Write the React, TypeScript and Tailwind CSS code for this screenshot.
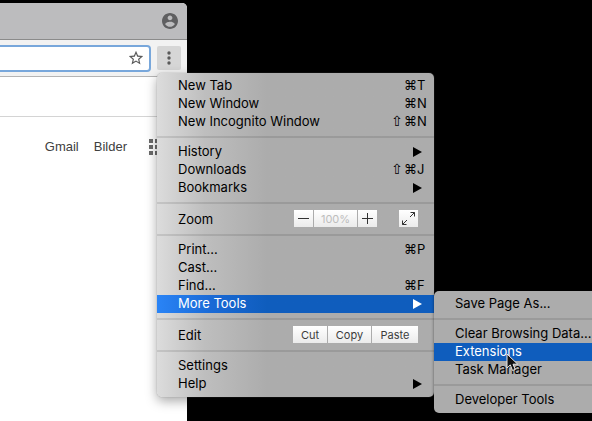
import type { ReactNode } from "react";

function Separator() {
  return <hr className="my-[5px] h-[2px] border-0 bg-black/10" />;
}

function Arrow() {
  return (
    <svg viewBox="0 0 9 10" className="mt-0.5 mr-3 h-[10px] w-[9px] fill-current" aria-hidden="true">
      <path d="M0 0 9 5 0 10Z" />
    </svg>
  );
}

function Shortcut({ letter, shift = false }: { letter: string; shift?: boolean }) {
  return (
    <span className="flex text-left">
      {shift && <span className="w-[13px] font-['DejaVu_Sans',sans-serif] text-[14px]">⇧</span>}
      <span className="w-[13px]">⌘</span>
      <span className="w-[17px]">{letter}</span>
    </span>
  );
}

function Item({ label, active = false, children }: { label: string; active?: boolean; children?: ReactNode }) {
  return (
    <button
      type="button"
      role="menuitem"
      className={
        active
          ? "flex h-[18px] w-full items-center justify-between bg-linear-to-r from-[#2a84f6] via-[#1a6ad6] via-[54px] to-[#0f5dbd] to-[110px] pb-0.5 pl-[21px] text-white"
          : "flex h-[18px] w-full items-center justify-between pb-0.5 pl-[21px]"
      }
    >
      <span className="whitespace-nowrap">{label}</span>
      {children}
    </button>
  );
}

const control =
  "flex h-[17px] items-center justify-center bg-linear-to-b from-white to-[#ebebeb] text-[11px] text-[#3c3c3c]";

function MainMenu() {
  return (
    <div
      role="menu"
      aria-label="Browser menu"
      className="absolute top-[73px] left-[157px] w-[277px] rounded-[5px] bg-linear-to-r from-[#dcdcdc] via-[#bebebe] via-[48px] to-[#acacac] to-[110px] py-1 shadow-[0_0_1px_#777,0_4px_12px_rgba(0,0,0,0.35)]"
    >
      <Item label="New Tab"><Shortcut letter="T" /></Item>
      <Item label="New Window"><Shortcut letter="N" /></Item>
      <Item label="New Incognito Window"><Shortcut shift letter="N" /></Item>
      <Separator />
      <Item label="History"><Arrow /></Item>
      <Item label="Downloads"><Shortcut shift letter="J" /></Item>
      <Item label="Bookmarks"><Arrow /></Item>
      <Separator />
      <div className="flex h-5 items-center pr-4 pb-px pl-[21px]">
        <span>Zoom</span>
        <div className="ml-auto flex gap-px">
          <button type="button" aria-label="Zoom out" className={`${control} w-[19px]`}>
            <svg viewBox="0 0 11 11" className="size-[11px]"><path d="M0 5.5h11" stroke="#333" /></svg>
          </button>
          <output className="flex h-[17px] w-[43px] items-center justify-center bg-linear-to-b from-white to-[#ebebeb] text-[11px] text-[#bdbdbd]">100%</output>
          <button type="button" aria-label="Zoom in" className={`${control} w-[19px]`}>
            <svg viewBox="0 0 11 11" className="size-[11px]"><path d="M0 5.5h11M5.5 0v11" stroke="#333" /></svg>
          </button>
        </div>
        <button type="button" aria-label="Full screen" className={`${control} ml-[22px] w-[19px]`}>
          <svg viewBox="0 0 13 13" className="size-[13px]" fill="none" stroke="#333">
            <path d="M8.5.5h4v4M12.5.5 8 5M4.500 12.500h-4v-4M.5 12.500 5 8" />
          </svg>
        </button>
      </div>
      <Separator />
      <Item label="Print..."><Shortcut letter="P" /></Item>
      <Item label="Cast..." />
      <Item label="Find..."><Shortcut letter="F" /></Item>
      <Item label="More Tools" active><Arrow /></Item>
      <Separator />
      <div className="flex h-5 items-center justify-between pr-4 pb-px pl-[21px]">
        <span>Edit</span>
        <div className="flex gap-px">
          <button type="button" className={`${control} w-[34px]`}>Cut</button>
          <button type="button" className={`${control} w-[43px]`}>Copy</button>
          <button type="button" className={`${control} w-[46px]`}>Paste</button>
        </div>
      </div>
      <Separator />
      <Item label="Settings" />
      <Item label="Help"><Arrow /></Item>
    </div>
  );
}

function ToolsMenu() {
  return (
    <div
      role="menu"
      aria-label="More Tools"
      className="absolute top-[291px] left-[434px] w-[176px] rounded-[5px] bg-[#acacac] py-1 shadow-[0_0_3px_rgba(0,0,0,0.5)]"
    >
      <Item label="Save Page As..." />
      <Separator />
      <Item label="Clear Browsing Data..." />
      <button type="button" role="menuitem" className="flex h-[18px] w-full items-center bg-[#0f5dbd] pb-0.5 pl-[21px] text-white">
        Extensions
      </button>
      <Item label="Task Manager" />
      <Separator />
      <Item label="Developer Tools" />
    </div>
  );
}

function BrowserWindow() {
  return (
    <div className="flex w-[187px] grow flex-col overflow-hidden rounded-tr-[5px] bg-white">
      <div className="flex h-[37px] items-center justify-end border-b border-[#8b8b8b] bg-[#bcbcbe] pr-[9px]">
        <button type="button" aria-label="Profile">
          <svg viewBox="2 2 20 20" className="size-4 fill-[#5f5f61]">
            <path d="M12 2C6.480 2 2 6.480 2 12s4.480 10 10 10 10-4.480 10-10S17.520 2 12 2zm0 3c1.660 0 3 1.340 3 3s-1.340 3-3 3-3-1.340-3-3 1.340-3 3-3zm0 14.200c-2.500 0-4.710-1.280-6-3.220.03-1.990 4-3.080 6-3.080 1.990 0 5.970 1.090 6 3.080-1.290 1.940-3.500 3.220-6 3.220z" />
          </svg>
        </button>
      </div>
      <div className="flex h-[37px] items-center gap-1.5 border-b border-[#b4b4b4] bg-[#f2f2f2] pr-1.5">
        <div className="flex h-[27px] grow items-center rounded-r-[4px] border-2 border-l-0 border-[#78a7db] bg-white pr-[5px]">
          <input type="text" aria-label="Address" className="h-5 w-0 grow outline-none" />
          <button type="button" aria-label="Bookmark this page">
            <svg viewBox="1 1 22 22" className="size-4 fill-[#5a5a5a]">
              <path d="M22 9.240l-7.190-.62L12 2 9.190 8.630 2 9.240l5.460 4.730L5.820 21 12 17.270 18.180 21l-1.630-7.030L22 9.240zM12 15.400l-3.760 2.270 1-4.280-3.320-2.880 4.380-.38L12 6.100l1.710 4.040 4.380.38-3.320 2.880 1 4.280L12 15.400z" />
            </svg>
          </button>
        </div>
        <button type="button" aria-label="Menu" className="flex size-6 items-center justify-center rounded-[2px] bg-[#d6d6d6]">
          <svg viewBox="0 0 4 14" className="h-[14px] w-1 fill-[#5a5a5a]">
            <circle cx="2" cy="2" r="1.700" /><circle cx="2" cy="7" r="1.700" /><circle cx="2" cy="12" r="1.700" />
          </svg>
        </button>
      </div>
      <div className="h-10 border-b border-[#d4d4d4]" />
      <nav className="flex items-center justify-end pt-[22px] pr-[22px] font-['Liberation_Sans',Arial,sans-serif] text-[13px] leading-4 text-[#404040]">
        <a href="#gmail">Gmail</a>
        <a href="#bilder" className="ml-[15px]">Bilder</a>
        <button type="button" aria-label="Apps" className="ml-[22px]">
          <svg viewBox="0 0 16 16" className="size-4 fill-[#6a6a6a]">
            <path d="M0 0h4v4H0zM6 0h4v4H6zM12 0h4v4h-4zM0 6h4v4H0zM6 6h4v4H6zM12 6h4v4h-4zM0 12h4v4H0zM6 12h4v4H6zM12 12h4v4h-4z" />
          </svg>
        </button>
      </nav>
    </div>
  );
}

export default function App() {
  return (
    <main className="relative flex min-h-screen flex-col overflow-hidden bg-black pt-[3px] font-[Inter,sans-serif] text-[13px] leading-[18px] text-black">
      <BrowserWindow />
      <MainMenu />
      <ToolsMenu />
      <svg viewBox="0 0 13 19" className="absolute top-[353px] left-[506px] h-[19px] w-[13px]" aria-hidden="true">
        <path d="M1 1v14l3.300-3.100L6.500 17.500l2.700-1.100L7 11.200h4.700Z" fill="#111" stroke="#e8e8e8" />
      </svg>
    </main>
  );
}
